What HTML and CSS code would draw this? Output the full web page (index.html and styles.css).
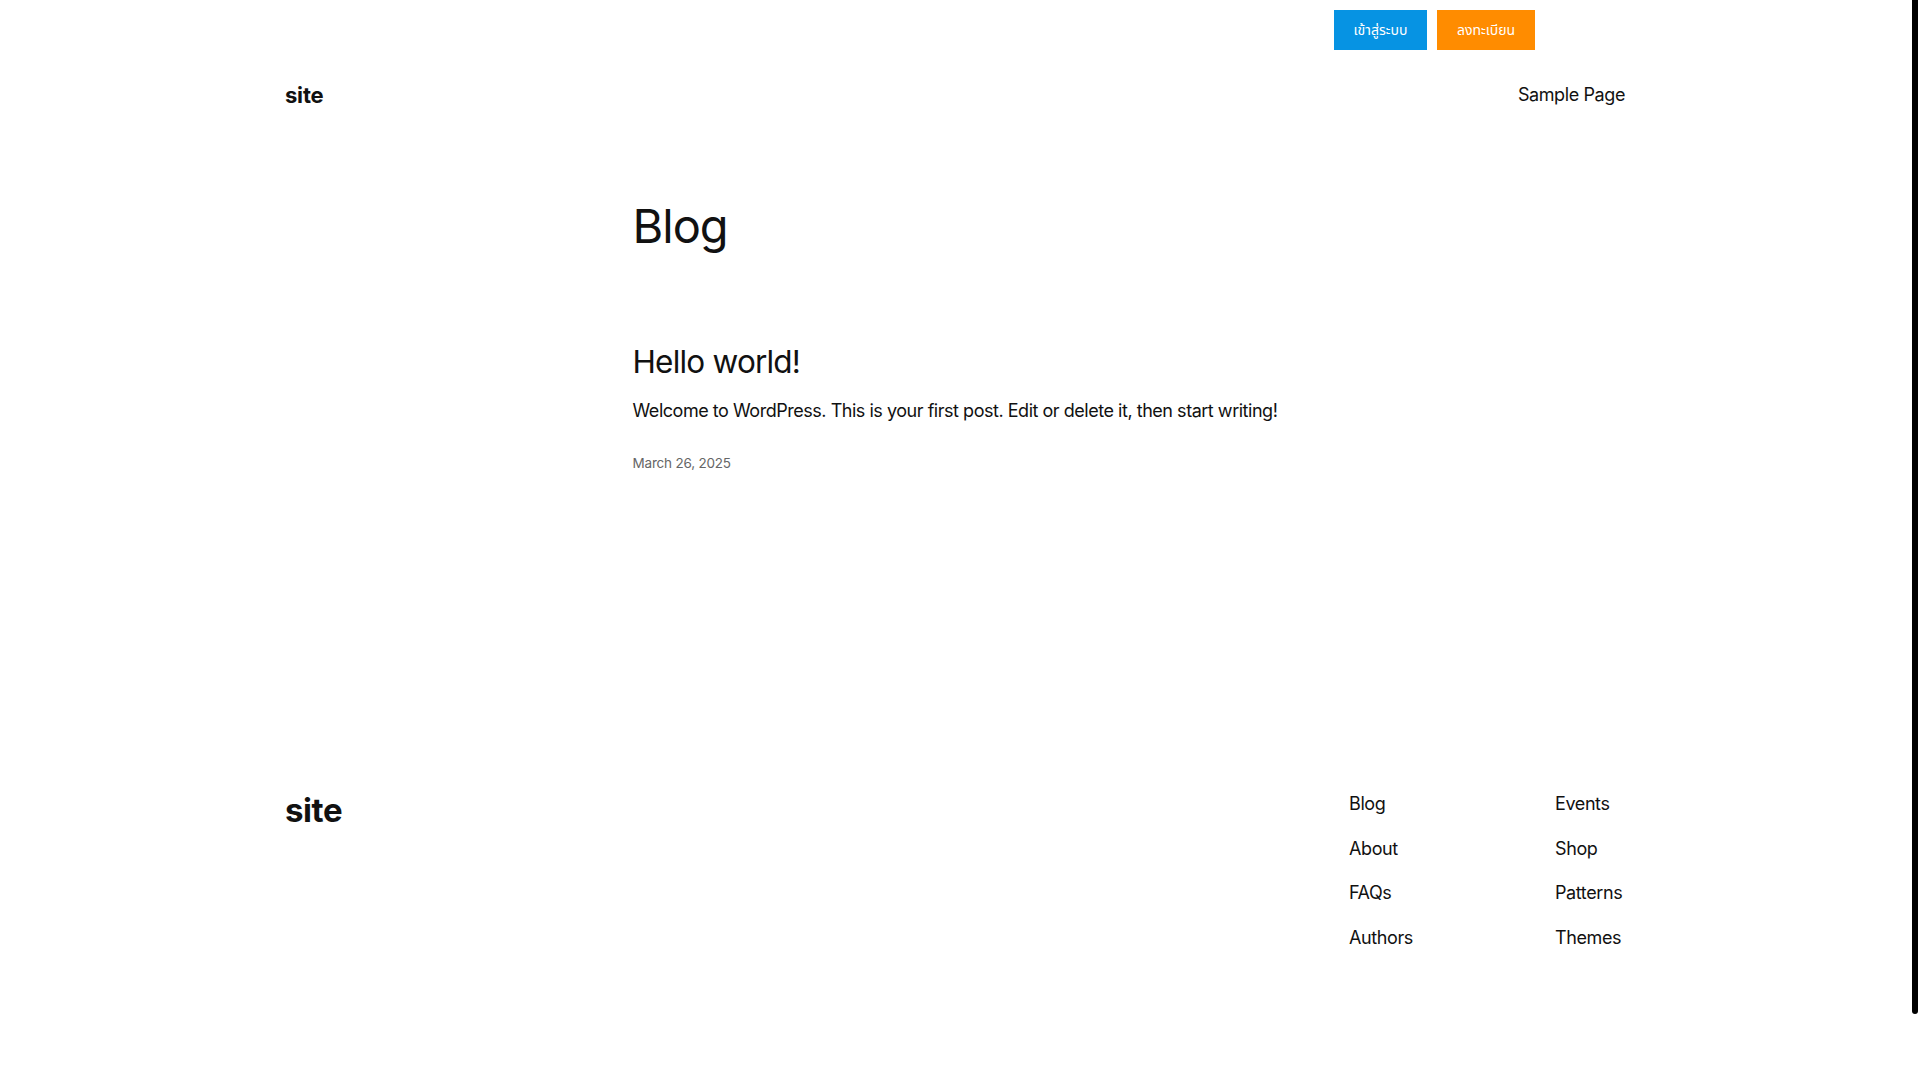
FILE: index.html
```html
<!DOCTYPE html>
<html lang="en">
<head>
<meta charset="utf-8">
<title>Blog – site</title>
<link rel="stylesheet" href="styles.css">
</head>
<body>
<div class="topbar">
  <a class="btn btn-login" href="#">เข้าสู่ระบบ</a>
  <a class="btn btn-register" href="#">ลงทะเบียน</a>
</div>
<header class="site-header">
  <a class="site-title" href="#">site</a>
  <nav class="main-nav"><a href="#">Sample Page</a></nav>
</header>
<main class="content">
  <h1 class="page-title">Blog</h1>
  <article class="post">
    <h2 class="post-title"><a href="#">Hello world!</a></h2>
    <p class="excerpt">Welcome to WordPress. This is your first post. Edit or delete it, then start writing!</p>
    <div class="post-date">March 26, 2025</div>
  </article>
</main>
<footer class="site-footer">
  <a class="footer-title" href="#">site</a>
  <nav class="footer-nav">
    <ul class="col col-1">
      <li><a href="#">Blog</a></li>
      <li><a href="#">About</a></li>
      <li><a href="#">FAQs</a></li>
      <li><a href="#">Authors</a></li>
    </ul>
    <ul class="col col-2">
      <li><a href="#">Events</a></li>
      <li><a href="#">Shop</a></li>
      <li><a href="#">Patterns</a></li>
      <li><a href="#">Themes</a></li>
    </ul>
  </nav>
</footer>
<div class="scrollbar"><div class="scroll-thumb"></div></div>
</body>
</html>
```

FILE: styles.css
```css
body {
  margin: 0 10px 0 0;
  background: #ffffff;
  color: #111111;
  font-family: Inter, "Noto Sans", sans-serif;
  -webkit-font-smoothing: antialiased;
}
a {
  color: inherit;
  text-decoration: none;
}
.scrollbar {
  position: fixed;
  top: 0;
  right: 0;
  width: 10px;
  height: 100%;
  background: #ffffff;
}
.scroll-thumb {
  margin-left: 2px;
  width: 6px;
  height: 1014px;
  background: #000000;
  border-radius: 0 0 3px 3px;
}
.topbar {
  width: 1340px;
  margin: 0 auto;
  box-sizing: border-box;
  padding: 10px 90px 0 0;
  display: flex;
  justify-content: flex-end;
  gap: 10px;
}
.btn {
  height: 40px;
  display: flex;
  align-items: center;
  justify-content: center;
  color: #ffffff;
  font-family: "Noto Sans Thai", "Noto Sans", "DejaVu Sans", sans-serif;
  font-size: 14px;
}
.btn-login {
  width: 93px;
  background: #0693e3;
}
.btn-register {
  width: 98px;
  background: #ff8c00;
}
.site-header {
  width: 1340px;
  margin: 0 auto;
  padding: 29px 0 27px;
  display: flex;
  justify-content: space-between;
  align-items: center;
  line-height: 32px;
}
.site-title {
  font-size: 22px;
  font-weight: 700;
  letter-spacing: -0.2px;
}
.main-nav {
  font-size: 18px;
  letter-spacing: -0.4px;
}
.content {
  width: 645px;
  margin: 0 auto;
  padding-top: 60px;
}
.page-title {
  margin: 0;
  font-size: 47px;
  line-height: 55px;
  font-weight: 400;
  letter-spacing: -1px;
}
.post {
  margin-top: 90px;
}
.post-title {
  margin: 0;
  font-size: 31.5px;
  line-height: 38px;
  font-weight: 400;
  letter-spacing: -0.8px;
}
.excerpt {
  margin: 15px 0 0;
  font-size: 18px;
  line-height: 29px;
  letter-spacing: -0.47px;
  white-space: nowrap;
}
.post-date {
  margin-top: 28px;
  font-size: 13.5px;
  line-height: 20px;
  color: #666666;
  letter-spacing: -0.2px;
}
.site-footer {
  width: 1340px;
  margin: 319px auto 0;
  padding-bottom: 200px;
  display: flex;
  justify-content: space-between;
  align-items: flex-start;
}
.footer-title {
  font-size: 33px;
  line-height: 36px;
  font-weight: 700;
  letter-spacing: -0.4px;
}
.footer-nav {
  display: flex;
  margin-top: -2px;
}
.col {
  list-style: none;
  margin: 0;
  padding: 0;
  display: flex;
  flex-direction: column;
  gap: 16.5px;
  font-size: 18px;
  line-height: 28px;
  letter-spacing: -0.4px;
}
.col-1 {
  width: 206px;
}
.col-2 {
  width: 70px;
}
.col li {
  white-space: nowrap;
}
```
